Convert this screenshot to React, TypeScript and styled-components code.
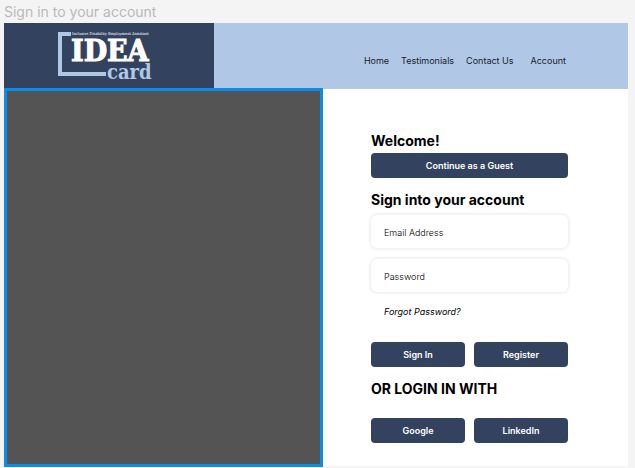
import React from "react";
import styled, { createGlobalStyle } from "styled-components";

const navy = "#33435f";
const sky = "#b0c8e6";
const accent = "#0c8ce9";

const GlobalStyle = createGlobalStyle`
  *, *::before, *::after { box-sizing: border-box; }
  body {
    margin: 0;
    background: #f4f4f4;
    color: #000;
    font-family: Inter, "Liberation Sans", sans-serif;
    font-size: 9px;
  }
`;

const Canvas = styled.div`
  display: flex;
  flex-direction: column;
  min-height: 100vh;
  padding: 0 7px 2px 4px;
`;

const FrameName = styled.div`
  height: 23px;
  font-size: 14px;
  line-height: 24px;
  color: #b9b9b9;
`;

const Frame = styled.div`
  flex: 1;
  display: flex;
  flex-direction: column;
  background: #fff;
`;

const Header = styled.header`
  display: flex;
  height: 66px;
  background: ${sky};
`;

const Brand = styled.a`
  flex: 0 0 210px;
  padding: 8px 0 0 52px;
  background: ${navy};
`;

const Nav = styled.nav`
  flex: 1;
  display: flex;
  justify-content: flex-end;
  align-items: center;
  gap: 12px;
  padding: 10px 62px 0 0;
`;

const NavLink = styled.a`
  color: #18202c;
  line-height: 12px;
  text-decoration: none;
  white-space: nowrap;

  &:last-child {
    margin-left: 5px;
  }
`;

const Main = styled.main`
  flex: 1;
  display: flex;
`;

const Picture = styled.div`
  flex: 0 0 319px;
  margin: -1px 0;
  border: 3px solid ${accent};
  background: #545454;
`;

const Panel = styled.section`
  flex: 1;
  min-width: 0;
  padding: 43px 60px 23px 48px;
`;

const Heading = styled.h2<{ $below: number }>`
  margin: 0 0 ${(p) => p.$below}px;
  font-size: 14px;
  line-height: 18px;
  font-weight: 700;
  white-space: nowrap;
`;

const ButtonRow = styled.div<{ $below?: number }>`
  display: flex;
  gap: 9px;
  margin-bottom: ${(p) => p.$below ?? 0}px;
`;

const Button = styled.button`
  flex: 1;
  height: 25px;
  padding: 0;
  border: 0;
  border-radius: 4px;
  background: ${navy};
  color: #fff;
  font: inherit;
  font-weight: 600;
  line-height: 12px;
`;

const Field = styled.input`
  display: block;
  width: 100%;
  height: 33px;
  margin-bottom: 11px;
  padding: 2px 13px 0;
  border: 0;
  border-radius: 6px;
  background: #fff;
  box-shadow: 0 0 4px rgba(0, 0, 0, 0.14);
  font: inherit;
  font-weight: 300;

  &::placeholder {
    color: #000;
    opacity: 1;
  }
`;

const ForgotLink = styled.a`
  display: block;
  margin: 14px 13px 24px;
  color: #000;
  font-style: italic;
  line-height: 12px;
  text-decoration: none;
`;

const Logo = () => (
  <svg width="100" height="54" viewBox="0 0 100 54" role="img" aria-label="IDEA card">
    <path d="M15 3H4V43H50" fill="none" stroke={sky} strokeWidth="4" />
    <g fontFamily="DejaVu Serif Condensed, DejaVu Serif, serif">
      <text x="16" y="4" fontSize="4" fill="#fff">
        Inclusive Disability Employment Assistant
      </text>
      <text x="15" y="30" fontSize="30" fontWeight="700" fill="#fff" stroke="#fff" strokeWidth="1">
        IDEA
      </text>
      <text x="51" y="48" fontSize="20" fontWeight="700" fill={sky}>
        card
      </text>
    </g>
  </svg>
);

export default function App() {
  return (
    <>
      <GlobalStyle />
      <Canvas>
        <FrameName>Sign in to your account</FrameName>
        <Frame>
          <Header>
            <Brand href="#home">
              <Logo />
            </Brand>
            <Nav>
              <NavLink href="#home">Home</NavLink>
              <NavLink href="#testimonials">Testimonials</NavLink>
              <NavLink href="#contact">Contact Us</NavLink>
              <NavLink href="#account">Account</NavLink>
            </Nav>
          </Header>
          <Main>
            <Picture />
            <Panel>
              <Heading $below={3}>Welcome!</Heading>
              <ButtonRow $below={13}>
                <Button type="button">Continue as a Guest</Button>
              </ButtonRow>
              <Heading $below={6}>Sign into your account</Heading>
              <form>
                <Field type="email" aria-label="Email Address" placeholder="Email Address" />
                <Field type="password" aria-label="Password" placeholder="Password" />
                <ForgotLink href="#forgot">Forgot Password?</ForgotLink>
                <ButtonRow $below={13}>
                  <Button type="submit">Sign In</Button>
                  <Button type="button">Register</Button>
                </ButtonRow>
              </form>
              <Heading $below={20}>OR LOGIN IN WITH</Heading>
              <ButtonRow>
                <Button type="button">Google</Button>
                <Button type="button">LinkedIn</Button>
              </ButtonRow>
            </Panel>
          </Main>
        </Frame>
      </Canvas>
    </>
  );
}
